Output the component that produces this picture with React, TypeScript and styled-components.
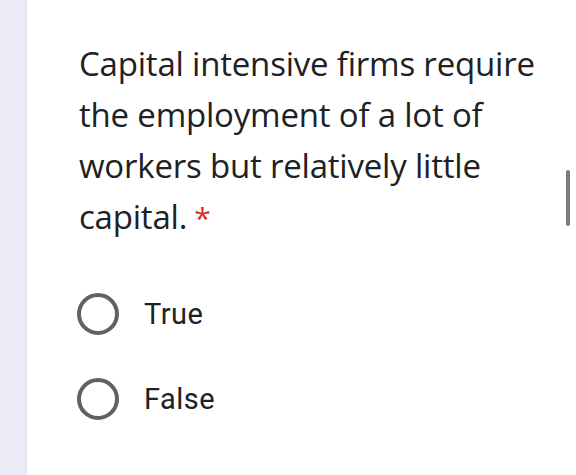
import React from "react";
import styled, { createGlobalStyle } from "styled-components";

const GlobalStyle = createGlobalStyle`
  html, body {
    margin: 0;
    padding: 0;
    background: #ffffff;
  }
  body {
    font-family: "Open Sans", "Noto Sans", sans-serif;
  }
`;

const options = ["True", "False"];

export default function App() {
  return (
    <>
      <GlobalStyle />
      <Page>
        <SideStrip />
        <Card>
          <Question>
            Capital intensive firms require the employment of a lot of workers
            but relatively little capital.
            <Required>*</Required>
          </Question>
          <OptionList>
            {options.map((label) => (
              <Option key={label}>
                <Radio />
                <OptionLabel>{label}</OptionLabel>
              </Option>
            ))}
          </OptionList>
        </Card>
        <ScrollThumb />
      </Page>
    </>
  );
}

const Page = styled.div`
  position: relative;
  display: flex;
  width: 576px;
  height: 475px;
  overflow: hidden;
  background: #ffffff;
`;

const SideStrip = styled.div`
  width: 26px;
  flex-shrink: 0;
  background: #ede9f7;
  border-right: 1px solid #e2ddef;
`;

const Card = styled.div`
  flex: 1;
  display: flex;
  flex-direction: column;
  padding: 38px 20px 0 52px;
`;

const Question = styled.div`
  width: 470px;
  font-family: "Open Sans", sans-serif;
  font-size: 33px;
  line-height: 51px;
  color: #202124;
  letter-spacing: -0.2px;
`;

const Required = styled.span`
  display: inline-block;
  color: #d93025;
  font-size: 30px;
  line-height: 1;
  margin-left: 7px;
`;

const OptionList = styled.div`
  display: flex;
  flex-direction: column;
  gap: 43px;
  margin-top: 51px;
`;

const Option = styled.div`
  display: flex;
  align-items: center;
  gap: 25px;
  height: 42px;
`;

const Radio = styled.span`
  box-sizing: border-box;
  width: 42px;
  height: 42px;
  border-radius: 50%;
  border: 4px solid #616161;
  flex-shrink: 0;
  margin-left: -2px;
`;

const OptionLabel = styled.span`
  font-family: Roboto, "Liberation Sans", sans-serif;
  font-size: 29px;
  letter-spacing: 0.5px;
  color: #202124;
`;

const ScrollThumb = styled.div`
  position: absolute;
  left: 566px;
  top: 170px;
  width: 4px;
  height: 56px;
  border-radius: 2px;
  background: #7a7a7a;
`;
